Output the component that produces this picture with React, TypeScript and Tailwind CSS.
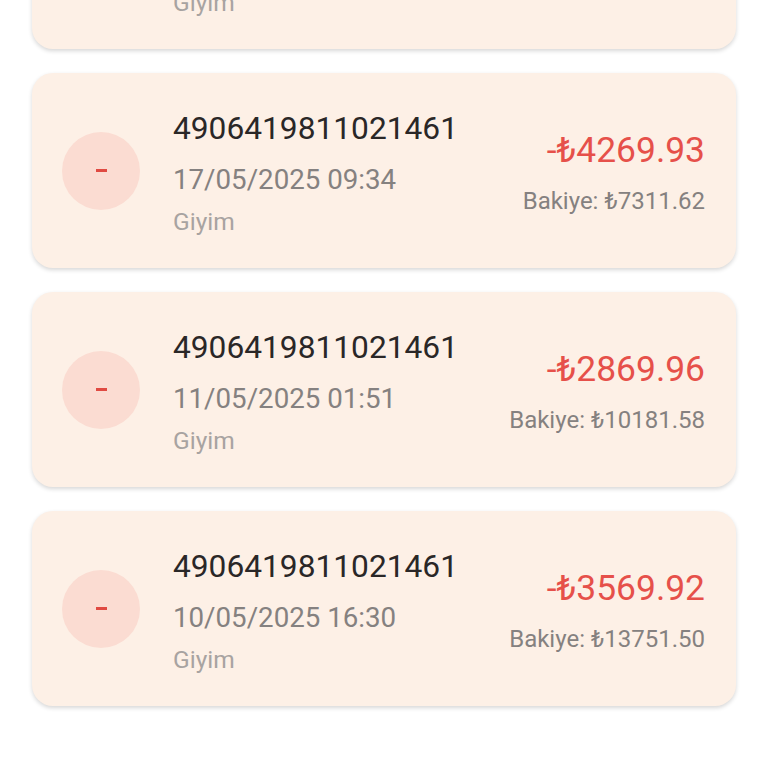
import React from "react";

type Tx = { no: string; date: string; cat: string; amount: string; balance: string };

const txs: Tx[] = [
  { no: "4906419811021461", date: "20/05/2025 12:10", cat: "Giyim", amount: "-₺1200.00", balance: "Bakiye: ₺3041.69" },
  { no: "4906419811021461", date: "17/05/2025 09:34", cat: "Giyim", amount: "-₺4269.93", balance: "Bakiye: ₺7311.62" },
  { no: "4906419811021461", date: "11/05/2025 01:51", cat: "Giyim", amount: "-₺2869.96", balance: "Bakiye: ₺10181.58" },
  { no: "4906419811021461", date: "10/05/2025 16:30", cat: "Giyim", amount: "-₺3569.92", balance: "Bakiye: ₺13751.50" },
];

function Card({ t }: { t: Tx }) {
  return (
    <div className="flex h-[195px] items-center rounded-[21px] bg-[#fdf0e6] pl-[30px] pr-[31px] shadow-[0_2px_4px_rgba(0,0,0,0.16)]">
      <div className="flex h-[78px] w-[78px] shrink-0 items-center justify-center rounded-full bg-[#fbdcd2]">
        <div className="h-[2.5px] w-[11px] bg-[#e04a42]" />
      </div>
      <div className="ml-[33px] flex flex-1 flex-col pt-[4px]">
        <div className="text-[31.7px] leading-[44px] text-[#2a2727]">{t.no}</div>
        <div className="mt-[11px] text-[27.7px] leading-[36px] text-[#858180]">{t.date}</div>
        <div className="mt-[8px] text-[24.5px] leading-[32px] text-[#a8a3a1]">{t.cat}</div>
      </div>
      <div className="mt-[4px] flex flex-col items-end">
        <div className="text-[35.4px] leading-[44px] text-[#e6504a]">{t.amount}</div>
        <div className="mt-[13px] text-[24px] leading-[32px] text-[#858180]">{t.balance}</div>
      </div>
    </div>
  );
}

export default function App() {
  return (
    <div className="h-[768px] w-[768px] overflow-hidden bg-white" style={{ fontFamily: "Roboto, 'Noto Sans', sans-serif" }}>
      <div className="-mt-[146px] flex flex-col gap-[24px] px-[32px]">
        {txs.map((t, i) => (
          <Card key={i} t={t} />
        ))}
      </div>
    </div>
  );
}
